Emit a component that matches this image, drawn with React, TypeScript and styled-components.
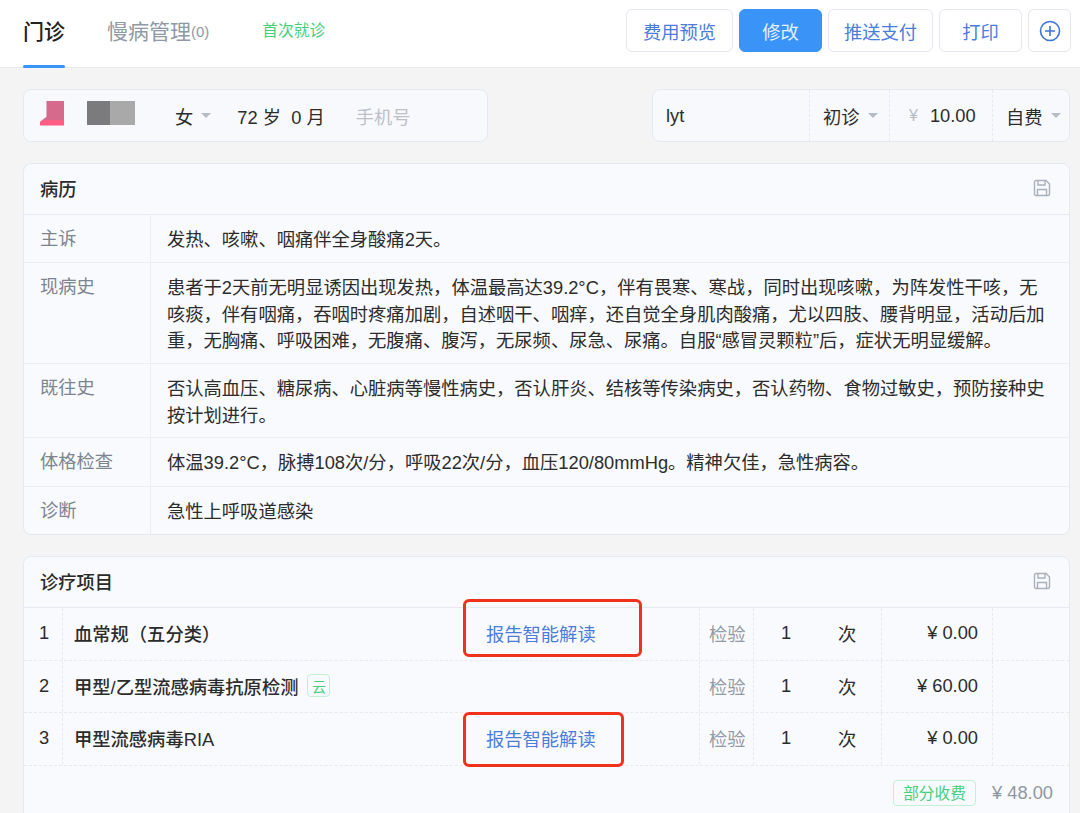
import React from 'react';
import styled, { createGlobalStyle } from 'styled-components';

const GlobalStyle = createGlobalStyle`
  html, body {
    margin: 0;
    padding: 0;
    background: #f4f4f4;
  }
  body {
    width: 1080px;
    height: 813px;
    overflow: hidden;
    font-family: "Liberation Sans", "Noto Sans CJK SC", sans-serif;
    color: #333;
  }
  * {
    box-sizing: border-box;
  }
`;

const Page = styled.div`
  width: 1080px;
  height: 813px;
  overflow: hidden;
`;

const Header = styled.header`
  height: 68px;
  background: #fff;
  border-bottom: 1px solid #e8ebef;
  display: flex;
  align-items: stretch;
  padding: 0 9px 0 23px;
`;

const Tab = styled.div<{ $active?: boolean }>`
  position: relative;
  display: flex;
  align-items: center;
  padding-bottom: 7px;
  margin-right: 42px;
  font-size: 21px;
  color: ${p => (p.$active ? '#222' : '#8f99a6')};
  font-weight: ${p => (p.$active ? 500 : 400)};

  ${p => p.$active && `
    &::after {
      content: '';
      position: absolute;
      left: 0;
      right: 0;
      bottom: -1px;
      height: 3px;
      border-radius: 2px;
      background: #3a94f8;
    }
  `}
`;

const TabCount = styled.span`
  font-size: 15px;
  margin-top: 3px;
`;

const FirstVisit = styled.div`
  display: flex;
  align-items: center;
  padding-bottom: 8px;
  margin-left: 11px;
  font-size: 15.7px;
  color: #45cf7c;
`;

const Actions = styled.div`
  margin-left: auto;
  display: flex;
  gap: 6px;
  padding-top: 9px;
`;

const ActionButton = styled.button<{ $primary?: boolean; $w: number }>`
  width: ${p => p.$w}px;
  height: 43px;
  padding: 0;
  border-radius: 6px;
  font: inherit;
  font-size: 18.3px;
  display: flex;
  align-items: center;
  justify-content: center;
  border: 1px solid ${p => (p.$primary ? '#3a94f8' : '#e3e7ee')};
  background: ${p => (p.$primary ? '#3a94f8' : '#fff')};
  color: ${p => (p.$primary ? '#e3f0ff' : '#4a7ddb')};
`;

const Content = styled.main`
  padding: 21px 10px 0 23px;
  display: flex;
  flex-direction: column;
`;

const PatientRow = styled.div`
  display: flex;
  justify-content: space-between;
  margin-bottom: 21px;
`;

const InfoBox = styled.div<{ $w: number }>`
  width: ${p => p.$w}px;
  height: 53px;
  display: flex;
  align-items: center;
  background: #f8f9fc;
  border: 1px solid #e6e9f1;
  border-radius: 8px;
  font-size: 18.3px;
  color: #2c2c2c;
`;

const Avatar = styled.div`
  display: flex;
  width: 135px;
  height: 30px;
  margin-left: 16px;
`;

const Surname = styled.div`
  width: 24px;
  height: 25px;
  background: linear-gradient(#d66a8c 76%, #ff5c85 76%);
  clip-path: polygon(27% 0, 100% 0, 100% 100%, 0 100%, 0 85%, 27% 65%);
`;

const NameBlur = styled.div<{ $c: string; $w: number; $ml?: number }>`
  width: ${p => p.$w}px;
  height: 24px;
  margin-left: ${p => p.$ml ?? 0}px;
  background: ${p => p.$c};
`;

const Caret = styled.i`
  display: inline-block;
  width: 0;
  height: 0;
  margin-left: 8px;
  border-left: 5px solid transparent;
  border-right: 5px solid transparent;
  border-top: 5px solid #b5bcc6;
`;

const Gender = styled.span`
  display: flex;
  align-items: center;
  margin-right: 26px;
`;

const Age = styled.span`
  margin-right: 31px;
`;

const Phone = styled.span`
  color: #bcc1c8;
`;

const Cell = styled.div<{ $w: number; $line?: boolean }>`
  width: ${p => p.$w}px;
  height: 100%;
  display: flex;
  align-items: center;
  padding-left: 13px;
  border-left: ${p => (p.$line ? '1px dashed #e6e9f1' : 'none')};
`;

const Yen = styled.span`
  color: #b5bcc6;
  font-size: 16px;
  margin-right: 12px;
  margin-left: 6px;
`;

const Card = styled.section`
  background: #f9fafd;
  border: 1px solid #e6e9f1;
  border-radius: 8px;
`;

const RecordCard = styled(Card)`
  margin-bottom: 21px;
`;

const CardHead = styled.div`
  height: 51px;
  display: flex;
  align-items: center;
  justify-content: space-between;
  padding: 0 18px 3px 16px;
  border-bottom: 1px solid #e6e9f1;
  font-size: 18.3px;
  font-weight: 500;
  color: #2a2a2a;
`;

const SaveIcon = () => (
  <svg width="18" height="18" viewBox="0 0 18 18" fill="none" stroke="#a9b1bb" strokeWidth="1.4">
    <path d="M3 1.5h10l3.5 3.5v10a1.5 1.5 0 0 1-1.5 1.5H3A1.5 1.5 0 0 1 1.5 15V3A1.5 1.5 0 0 1 3 1.5z" />
    <path d="M5 1.5v4.5h7V1.5M4.5 16.5v-6h9v6" />
  </svg>
);

const RecordRow = styled.div<{ $h: number }>`
  display: grid;
  grid-template-columns: 127px 1fr;
  min-height: ${p => p.$h}px;
  border-bottom: 1px solid #eceef3;

  &:last-child {
    border-bottom: none;
  }
`;

const RecordLabel = styled.div`
  padding: 11px 0 0 16px;
  font-size: 18.3px;
  line-height: 26px;
  color: #7d8590;
  border-right: 1px solid #eceef3;
`;

const RecordText = styled.div`
  padding: 12px 16px 0 16px;
  font-size: 18.3px;
  line-height: 26.5px;
  color: #2c2c2c;
`;

const ItemRow = styled.div`
  display: grid;
  grid-template-columns: 39px 637px 54px 60px 68px 111px 1fr;
  height: 52.5px;
  border-bottom: 1px dashed #e6e9f1;
  font-size: 18.3px;
  color: #2c2c2c;
`;

const ItemCell = styled.div<{ $line?: boolean; $right?: boolean; $muted?: boolean; $pad?: number }>`
  display: flex;
  align-items: center;
  justify-content: ${p => (p.$right ? 'flex-end' : 'flex-start')};
  padding: ${p => (p.$right ? '0 14px 1px 0' : `0 0 1px ${p.$pad ?? 0}px`)};
  border-right: ${p => (p.$line ? '1px dashed #e6e9f1' : 'none')};
  color: ${p => (p.$muted ? '#929aa5' : 'inherit')};
`;

const ItemName = styled.span`
  flex: 0 0 412px;
  font-weight: 500;
  display: flex;
  align-items: center;
`;

const CloudTag = styled.span`
  width: 23px;
  height: 23px;
  margin-left: 9px;
  display: inline-flex;
  align-items: center;
  justify-content: center;
  font-size: 14px;
  font-weight: 400;
  color: #45cf7c;
  border: 1px solid #c3f0d4;
  border-radius: 4px;
`;

const ReportWrap = styled.span`
  position: relative;
  color: #4a7ddb;
`;

const Highlight = styled.span<{ $w: number; $h: number; $up: number }>`
  position: absolute;
  left: -23px;
  top: 50%;
  margin-top: -${p => p.$up}px;
  width: ${p => p.$w}px;
  height: ${p => p.$h}px;
  border: 3px solid #f0311c;
  border-radius: 6px;
`;

const Summary = styled.div`
  height: 54px;
  display: flex;
  align-items: center;
  justify-content: flex-end;
  padding-right: 16px;
`;

const StatusTag = styled.span`
  width: 83px;
  height: 26px;
  display: flex;
  align-items: center;
  justify-content: center;
  font-size: 15.7px;
  color: #45cf7c;
  border: 1px solid #c3f0d4;
  border-radius: 4px;
`;

const SummaryAmount = styled.span`
  margin-left: 16px;
  font-size: 18.3px;
  color: #8f97a2;
`;

const record = [
  { label: '主诉', h: 48, text: '发热、咳嗽、咽痛伴全身酸痛2天。' },
  {
    label: '现病史',
    h: 101,
    text: '患者于2天前无明显诱因出现发热，体温最高达39.2°C，伴有畏寒、寒战，同时出现咳嗽，为阵发性干咳，无咳痰，伴有咽痛，吞咽时疼痛加剧，自述咽干、咽痒，还自觉全身肌肉酸痛，尤以四肢、腰背明显，活动后加重，无胸痛、呼吸困难，无腹痛、腹泻，无尿频、尿急、尿痛。自服“感冒灵颗粒”后，症状无明显缓解。',
  },
  {
    label: '既往史',
    h: 74,
    text: '否认高血压、糖尿病、心脏病等慢性病史，否认肝炎、结核等传染病史，否认药物、食物过敏史，预防接种史按计划进行。',
  },
  { label: '体格检查', h: 49, text: '体温39.2°C，脉搏108次/分，呼吸22次/分，血压120/80mmHg。精神欠佳，急性病容。' },
  { label: '诊断', h: 47, text: '急性上呼吸道感染' },
];

const items = [
  { no: 1, name: '血常规（五分类）', price: '¥ 0.00', box: { w: 179, h: 58, up: 34 } },
  { no: 2, name: '甲型/乙型流感病毒抗原检测', price: '¥ 60.00', cloud: true },
  { no: 3, name: '甲型流感病毒RIA', price: '¥ 0.00', box: { w: 161, h: 55, up: 26 } },
];

export default function App() {
  return (
    <Page>
      <GlobalStyle />
      <Header>
        <Tab $active>门诊</Tab>
        <Tab>慢病管理<TabCount>(0)</TabCount></Tab>
        <FirstVisit>首次就诊</FirstVisit>
        <Actions>
          <ActionButton $w={107}>费用预览</ActionButton>
          <ActionButton $w={83} $primary>修改</ActionButton>
          <ActionButton $w={105}>推送支付</ActionButton>
          <ActionButton $w={83}>打印</ActionButton>
          <ActionButton $w={43}>
            <svg width="22" height="22" viewBox="0 0 22 22" fill="none" stroke="#3d74d9" strokeWidth="1.6">
              <circle cx="11" cy="11" r="9.5" />
              <path d="M11 6v10M6 11h10" />
            </svg>
          </ActionButton>
        </Actions>
      </Header>
      <Content>
        <PatientRow>
          <InfoBox $w={465}>
            <Avatar>
              <Surname />
              <NameBlur $c="#7b7b7d" $w={23} $ml={23} />
              <NameBlur $c="#a9a9aa" $w={25} />
            </Avatar>
            <Gender>女<Caret /></Gender>
            <Age>72 岁&nbsp; 0 月</Age>
            <Phone>手机号</Phone>
          </InfoBox>
          <InfoBox $w={418}>
            <Cell $w={156}>lyt</Cell>
            <Cell $w={80} $line>初诊<Caret /></Cell>
            <Cell $w={103} $line><Yen>¥</Yen>10.00</Cell>
            <Cell $w={77} $line>自费<Caret /></Cell>
          </InfoBox>
        </PatientRow>
        <RecordCard>
          <CardHead>病历<SaveIcon /></CardHead>
          {record.map(r => (
            <RecordRow key={r.label} $h={r.h}>
              <RecordLabel>{r.label}</RecordLabel>
              <RecordText>{r.text}</RecordText>
            </RecordRow>
          ))}
        </RecordCard>
        <Card>
          <CardHead>诊疗项目<SaveIcon /></CardHead>
          {items.map(it => (
            <ItemRow key={it.no}>
              <ItemCell $line $pad={15}>{it.no}</ItemCell>
              <ItemCell $line $pad={11}>
                <ItemName>
                  {it.name}
                  {it.cloud && <CloudTag>云</CloudTag>}
                </ItemName>
                {it.box && (
                  <ReportWrap>
                    报告智能解读
                    <Highlight $w={it.box.w} $h={it.box.h} $up={it.box.up} />
                  </ReportWrap>
                )}
              </ItemCell>
              <ItemCell $line $muted $pad={9}>检验</ItemCell>
              <ItemCell $pad={27}>1</ItemCell>
              <ItemCell $line $pad={24}>次</ItemCell>
              <ItemCell $line $right>{it.price}</ItemCell>
              <ItemCell />
            </ItemRow>
          ))}
          <Summary>
            <StatusTag>部分收费</StatusTag>
            <SummaryAmount>¥ 48.00</SummaryAmount>
          </Summary>
        </Card>
      </Content>
    </Page>
  );
}
